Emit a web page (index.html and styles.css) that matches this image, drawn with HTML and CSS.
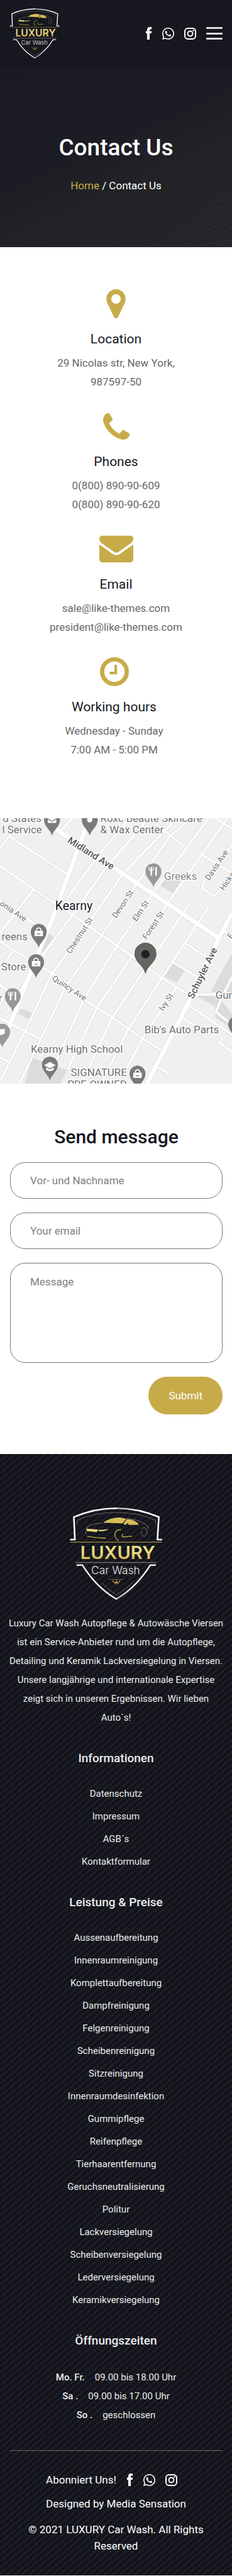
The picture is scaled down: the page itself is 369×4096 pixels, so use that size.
FILE: index.html
```html
<!DOCTYPE html>
<html lang="de">
<head>
<meta charset="utf-8">
<meta name="viewport" content="width=device-width, initial-scale=1">
<title>Contact Us – Luxury Car Wash</title>
<link rel="stylesheet" href="styles.css">
</head>
<body>
<svg class="defs" aria-hidden="true">
  <defs>
    <linearGradient id="gold" x1="0" y1="0" x2="0" y2="1"><stop offset=".5" stop-color="#ecdb82"/><stop offset=".95" stop-color="#c9a742"/></linearGradient>
    <linearGradient id="silver" x1="0" y1="0" x2="1" y2="0"><stop offset=".5" stop-color="#fff"/><stop offset=".52" stop-color="#b9b9b9"/><stop offset=".75" stop-color="#fff"/></linearGradient>
    <symbol id="logo" viewBox="20 22 526 530">
      <path fill="none" stroke="url(#silver)" stroke-width="9" d="M22 208H49L43 80Q160 30 285 30T527 80L519 208H545"/>
      <path fill="none" stroke="url(#silver)" stroke-width="8" d="M58 354H92Q170 480 285 547Q400 480 478 354H510"/>
      <path fill="none" stroke="#77736a" stroke-width="3" d="M62 125V98Q160 54 285 54T508 98V125M205 457Q240 495 285 522Q340 490 380 448"/>
      <path stroke="#a98f45" stroke-width="4" d="M22 223H545"/>
      <path stroke="#6f6f6c" stroke-width="6" d="M52 339H513"/>
      <path fill="#d8bd57" d="M208 112Q250 84 300 82L342 89L320 116ZM323 121L345 92Q395 94 414 124L356 125L350 113L340 123Z"/>
      <path fill="#ecdb82" d="M115 146L181 151L174 165L117 160ZM186 154L243 149Q220 162 181 161Z"/>
      <path fill="none" stroke="#8b8777" stroke-width="3" d="M115 146Q125 118 205 115M109 178Q108 150 125 135M345 88Q420 92 466 135V148M428 150Q440 130 455 148Q466 180 444 191Q426 186 427 160"/>
      <path fill="none" stroke="#c9a742" stroke-width="5" d="M312 151Q280 150 276 178Q277 206 300 214M319 176L320 194L375 189M118 190L170 197L226 200"/>
      <text class="logo-name" x="293" y="318" text-anchor="middle">LUXURY</text>
      <text class="logo-sub" x="281" y="405" text-anchor="middle">Car Wash</text>
      <path fill="none" stroke="#77736a" stroke-width="3" d="M242 435H324"/>
      <path fill="none" stroke="#c9a742" stroke-width="4" d="M285 438V463M265 440Q265 456 280 450M305 440Q305 456 290 450M274 460L285 448L296 460"/>
    </symbol>
    <symbol id="facebook" viewBox="0 440 768 1648"><path d="M511 980h257l-30 284h-227v824h-341v-824h-170v-284h170v-171q0-182 86-275.500t283-93.500h227v284h-142q-39 0-62.500 6.500t-34 23.500-13.500 34.500-3 49.500v142z"/></symbol>
    <symbol id="whatsapp" viewBox="0 32 448 448"><path d="M380.900 97.100C339 55.100 283.200 32 223.900 32c-122.400 0-222 99.600-222 222 0 39.100 10.200 77.300 29.600 111L0 480l117.700-30.900c32.400 17.700 68.900 27 106.100 27h.1c122.300 0 224.100-99.600 224.100-222 0-59.300-25.200-115-67.100-157zm-157 341.600c-33.200 0-65.700-8.900-94-25.700l-6.700-4-69.800 18.300L72 359.200l-4.400-7c-18.500-29.400-28.200-63.300-28.200-98.200 0-101.700 82.800-184.500 184.600-184.500 49.300 0 95.600 19.200 130.400 54.100 34.800 34.900 56.200 81.200 56.100 130.500 0 101.800-84.900 184.600-186.600 184.600zm101.200-138.200c-5.500-2.800-32.800-16.200-37.900-18-5.100-1.900-8.800-2.800-12.500 2.800-3.700 5.600-14.300 18-17.600 21.800-3.200 3.700-6.500 4.200-12 1.400-32.600-16.300-54-29.100-75.500-66-5.700-9.800 5.700-9.100 16.300-30.300 1.800-3.700.9-6.900-.5-9.700-1.400-2.800-12.500-30.100-17.100-41.200-4.500-10.800-9.100-9.300-12.500-9.500-3.200-.2-6.900-.2-10.600-.2-3.700 0-9.700 1.400-14.800 6.900-5.100 5.600-19.400 19-19.400 46.300 0 27.300 19.900 53.700 22.600 57.400 2.800 3.700 39.100 59.700 94.800 83.800 35.200 15.200 49 16.500 66.600 13.900 10.700-1.600 32.800-13.400 37.400-26.400 4.600-13 4.600-24.100 3.200-26.400-1.300-2.500-5-3.900-10.500-6.600z"/></symbol>
    <symbol id="instagram" viewBox="0 0 24 24"><rect x="1.300" y="1.300" width="21.400" height="21.400" rx="6" fill="none" stroke="currentColor" stroke-width="2.500"/><circle cx="12" cy="12" r="5" fill="none" stroke="currentColor" stroke-width="2.500"/><circle cx="18.300" cy="5.700" r="1.600"/></symbol>
    <symbol id="pin" viewBox="-16 -46 32 47" overflow="visible"><path d="M0 0C-2-10-15-17-15-30A15 15 0 0 1 15-30C15-17 2-10 0 0Z"/></symbol>
  </defs>
</svg>

<header class="topbar">
  <a class="brand" href="#" aria-label="Luxury Car Wash"><svg><use href="#logo"/></svg></a>
  <nav class="topbar-nav" aria-label="Social">
    <a class="social fb" href="#" aria-label="Facebook"><svg><use href="#facebook"/></svg></a>
    <a class="social" href="#" aria-label="WhatsApp"><svg><use href="#whatsapp"/></svg></a>
    <a class="social" href="#" aria-label="Instagram"><svg><use href="#instagram"/></svg></a>
    <button class="burger" type="button" aria-label="Menu"><span></span><span></span><span></span></button>
  </nav>
</header>

<main>
  <section class="hero">
    <h1>Contact Us</h1>
    <p class="crumbs"><a href="#">Home</a> / Contact Us</p>
    <svg class="hero-dots" viewBox="0 0 60 100" aria-hidden="true"><path d="M42 0h0M48 1h0M54 2h0M35 6h0M22 15h0M42 13h0M53 14h0M15 22h0M38 24h0M33 26h0M44 25h0M50 28h0M56 22h0M9 39h0M16 37h0M25 36h0M31 38h0M39 34h0M48 37h0M55 34h0M0 48h0M10 49h0M18 54h0M25 52h0M32 50h0M38 46h0M43 51h0M50 47h0M56 43h0M8 63h0M14 60h0M20 66h0M28 62h0M34 58h0M40 62h0M47 57h0M54 55h0M1 76h0M11 72h0M22 75h0M29 70h0M36 74h0M41 68h0M49 71h0M55 66h0M10 82h0M18 82h0M27 80h0M33 84h0M39 79h0M45 83h0M52 78h0M56 86h0M14 95h0M25 92h0M31 94h0M37 90h0M43 95h0M49 88h0M54 94h0"/></svg>
  </section>

  <section class="info">
    <article class="info-item">
      <svg class="icon-marker" viewBox="384 128 1024 1536"><path d="M1152 640q0-106-75-181t-181-75-181 75-75 181 75 181 181 75 181-75 75-181zm256 0q0 109-33 179l-364 774q-16 33-47.500 52t-67.500 19-67.500-19-46.500-52l-365-774q-33-70-33-179 0-212 150-362t362-150 362 150 150 362z"/></svg>
      <h2>Location</h2>
      <p>29 Nicolas str, New York,<br>987597-50</p>
    </article>
    <article class="info-item">
      <svg class="icon-phone" viewBox="192 128 1408 1408"><path d="M1600 1240q0 27-10 70.500t-21 68.500q-21 50-122 106-94 51-186 51-27 0-53-3.500t-57.500-12.500-47-14.500-55.500-20.500-49-18q-98-35-175-83-127-79-264-216t-216-264q-48-77-83-175-3-9-18-49t-20.500-55.500-14.500-47-12.500-57.500-3.500-53q0-92 51-186 56-101 106-122 25-11 68.500-21t70.500-10q14 0 21 3 18 6 53 76 11 19 30 54t35 63.500 31 53.500q3 4 17.500 25t21.500 35.500 7 28.500q0 20-28.500 50t-62 55-62 53-28.500 46q0 9 5 22.500t8.500 20.500 14 24 11.500 19q76 137 174 235t235 174q2 1 19 11.500t24 14 20.500 8.500 22.500 5q18 0 46-28.500t53-62 55-62 50-28.500q14 0 28.500 7t35.500 21.500 25 17.500q25 15 53.500 31t63.500 35 54 30q70 35 76 53 3 7 3 21z"/></svg>
      <h2>Phones</h2>
      <p>0(800) 890-90-609<br>0(800) 890-90-620</p>
    </article>
    <article class="info-item">
      <svg class="icon-mail" viewBox="0 256 1792 1408"><path d="M1792 710v794q0 66-47 113t-113 47h-1472q-66 0-113-47t-47-113v-794q44 49 101 87 362 246 497 345 57 42 92.500 65.500t94.500 48 110 24.500h2q51 0 110-24.500t94.500-48 92.500-65.500q170-123 498-345 57-39 100-87zm0-294q0 79-49 151t-122 123q-376 261-468 325-10 7-42.500 31t-54 38.500-52 32.500-57.500 27-50 9h-2q-23 0-50-9t-57.500-27-52-32.500-54-38.500-42.500-31q-91-64-262-182.500t-205-142.500q-62-42-117-115.500t-55-136.500q0-78 41.500-130t118.500-52h1472q65 0 112.500 47t47.500 113z"/></svg>
      <h2>Email</h2>
      <p>sale@like-themes.com<br>president@like-themes.com</p>
    </article>
    <article class="info-item info-hours">
      <svg class="icon-clock" viewBox="0 0 54 54"><circle cx="27" cy="27" r="23" fill="none" stroke="currentColor" stroke-width="8"/><path d="M27 14h4q1 0 1 1v16q0 1-1 1H19q-1 0-1-1v-3q0-1 1-1h8V15q0-1 1-1z"/></svg>
      <h2>Working hours</h2>
      <p>Wednesday - Sunday<br>7:00 AM - 5:00 PM</p>
    </article>
  </section>

  <section class="map" aria-label="Map">
    <svg viewBox="0 0 437 500" preserveAspectRatio="xMidYMid slice">
      <defs>
        <g id="streets">
          <path d="M410 61L345 130M840 61L600 330L410 590L240 810L40 1120M1000 61L690 370L490 650L285 925L145 1220L0 1500M730 61L560 260L500 340L380 500M1080 61L960 160L780 410L575 700L370 985L220 1290L110 1513M1180 61L865 470L660 760L475 1050L290 1450M1285 61L945 530L745 815L550 1095L380 1440M1070 530L830 870L635 1150L460 1513M1175 550L915 935L725 1215L570 1513M995 990L805 1265L700 1460"/>
          <path d="M50 160L385 370M0 320L190 450L410 590L575 700L745 815L915 935L1080 1035L1130 1025H1311M0 735L150 825L300 910L470 1050L635 1150L805 1265L910 1330M0 1155L60 1185L225 1265M0 970L40 1000L0 1080M0 1370L50 1395M60 150L0 225M190 450L0 690M75 785L0 890M0 510L230 660"/>
          <path d="M880 90L1040 215M1220 61L1311 120M1140 260L1311 360M1311 210L1160 400Q1130 425 1155 450L1210 490L1311 370M1050 745L1180 830M980 850L1120 930M1060 1080L1311 1245M1030 1150L1160 1230M870 1410L950 1455M1270 680L1311 710M1311 1190L1220 1120L1250 1050L1311 930M1260 1260L1240 1290L1311 1340"/>
        </g>
        <g id="avenues"><path d="M300 110L1235 715M505 61L440 230L300 600L215 800L60 1180L0 1310M1311 580L1235 720L1060 1080L830 1513"/></g>
        <g id="bag"><path fill="#fff" d="M-8-32H8V-22H-8Z"/><path d="M-4-32V-35Q0-40 4-35V-32" fill="none" stroke="#fff" stroke-width="2"/><path d="M-3-27Q0-24 3-27" fill="none" stroke="#777" stroke-width="1.500"/></g>
        <g id="cutlery" stroke="#fff" stroke-width="3"><path d="M-4-38V-22M5-38V-22"/><path stroke-width="1.500" d="M-8-38V-33Q-4-29 0-33V-38" fill="none"/></g>
      </defs>
      <rect width="437" height="500" fill="#f0f0f0"/>
      <g transform="scale(.3333 .3444) translate(0 -61)" fill="none">
        <path fill="#dcdcdc" d="M930 390L1025 405L975 470L900 425ZM980 850L1045 890L1000 960L925 925ZM1311 800L1190 1010L1311 1020ZM1100 1030L1230 1030L1311 1130V1210L1215 1150V1090ZM270 690L310 715L250 800L235 790ZM120 1100L180 1125L165 1160L100 1130ZM180 1370L380 1440L340 1513H140Z"/>
        <use href="#streets" stroke="#dadada" stroke-width="17"/>
        <use href="#avenues" stroke="#dedede" stroke-width="29"/>
        <use href="#streets" stroke="#fff" stroke-width="12"/>
        <use href="#avenues" stroke="#fff" stroke-width="24"/>
      </g>
      <g class="pins">
        <use href="#pin" x="-16" y="-46" width="32" height="47" transform="translate(98 33)"/>
        <use href="#pin" x="-16" y="-46" width="32" height="47" transform="translate(169 33)"/>
        <use class="light" href="#pin" x="-16" y="-46" width="32" height="47" transform="translate(289 130)"/>
        <use href="#pin" x="-16" y="-46" width="32" height="47" transform="translate(73 244)"/>
        <use href="#pin" x="-16" y="-46" width="32" height="47" transform="translate(68 301)"/>
        <use class="light" href="#pin" x="-16" y="-46" width="32" height="47" transform="translate(24 365)"/>
        <use class="light" href="#pin" x="-16" y="-46" width="32" height="47" transform="translate(4 432)"/>
        <use href="#pin" x="-16" y="-46" width="32" height="47" transform="translate(94 494)"/>
        <use href="#pin" x="-16" y="-46" width="32" height="47" transform="translate(259 511)"/>
        <use href="#pin" x="-16" y="-46" width="32" height="47" transform="translate(445 418)"/>
      </g>
      <use href="#bag" transform="translate(73 244)"/>
      <use href="#bag" transform="translate(68 301)"/>
      <use href="#bag" transform="translate(259 511)"/>
      <use href="#cutlery" transform="translate(289 130)"/>
      <use href="#cutlery" transform="translate(24 365)"/>
      <path fill="#fff" d="M90 0H106V9H90ZM-6 397H9V405Q2 411-6 407ZM83 465L94 459L105 465L94 471ZM87 469V474Q94 479 101 474V469L94 473Z"/>
      <path fill="none" stroke="#777" stroke-width="1.500" d="M90 1L98 6L106 1"/>
      <circle cx="169" cy="3" r="5" fill="#fff"/>
      <path fill="#66655f" stroke="#444" d="M274 292C271 277 254 272 254 255A20 20 0 0 1 294 255C294 272 277 277 274 292Z"/>
      <circle cx="274" cy="256" r="8" fill="#202127"/>
      <g class="places">
        <text x="78" y="7" text-anchor="end">d States</text>
        <text x="79" y="29" text-anchor="end">l Service</text>
        <text x="189" y="7">Roxc Beauté Skincare</text>
        <text x="189" y="29">&amp; Wax Center</text>
        <text class="soft" x="309" y="116">Greeks</text>
        <text x="52" y="230" text-anchor="end">reens</text>
        <text x="49" y="287" text-anchor="end">Store</text>
        <text x="4" y="346" text-anchor="end">r</text>
        <text x="406" y="340">Gun</text>
        <text x="272" y="405">Bib's Auto Parts</text>
        <text x="58" y="442">Kearny High School</text>
        <text x="239" y="486" text-anchor="end">SIGNATURE</text>
        <text x="239" y="508" text-anchor="end">PRE-OWNED</text>
        <text class="town" x="104" y="173">Kearny</text>
      </g>
      <g class="roads">
        <text class="major" transform="translate(126 45) rotate(32)">Midland Ave</text>
        <text class="major" transform="translate(364 341) rotate(-64)">Schuyler Ave</text>
        <text transform="translate(133 256) rotate(-57)">Chestnut St</text>
        <text transform="translate(219 189) rotate(-56)">Devon St</text>
        <text transform="translate(257 195) rotate(-56)">Elm St</text>
        <text transform="translate(276 229) rotate(-56)">Forest St</text>
        <text transform="translate(307 364) rotate(-56)">Ivy St</text>
        <text transform="translate(394 118) rotate(-56)">Davis Ave</text>
        <text transform="translate(422 137) rotate(-56)">Hicks</text>
        <text transform="translate(97 304) rotate(33)">Quincy Ave</text>
        <text transform="translate(46 195) rotate(34)" text-anchor="end">onia Ave</text>
        <text transform="translate(436 228) rotate(-56)">E</text>
      </g>
    </svg>
  </section>

  <section class="message">
    <h2>Send message</h2>
    <form class="form">
      <input type="text" placeholder="Vor- und Nachname" aria-label="Vor- und Nachname">
      <input type="email" placeholder="Your email" aria-label="Your email">
      <textarea placeholder="Message" aria-label="Message"></textarea>
      <button class="submit" type="submit">Submit</button>
    </form>
  </section>
</main>

<footer class="footer">
  <svg class="footer-logo" role="img" aria-label="Luxury Car Wash"><use href="#logo"/></svg>
  <p class="about">Luxury Car Wash Autopflege &amp; Autowäsche Viersen<br>ist ein Service-Anbieter rund um die Autopflege,<br>Detailing und Keramik Lackversiegelung in Viersen.<br>Unsere langjährige und internationale Expertise<br>zeigt sich in unseren Ergebnissen. Wir lieben<br>Auto´s!</p>
  <h3>Informationen</h3>
  <ul class="links">
    <li><a href="#">Datenschutz</a></li>
    <li><a href="#">Impressum</a></li>
    <li><a href="#">AGB´s</a></li>
    <li><a href="#">Kontaktformular</a></li>
  </ul>
  <h3>Leistung &amp; Preise</h3>
  <ul class="links">
    <li><a href="#">Aussenaufbereitung</a></li>
    <li><a href="#">Innenraumreinigung</a></li>
    <li><a href="#">Komplettaufbereitung</a></li>
    <li><a href="#">Dampfreinigung</a></li>
    <li><a href="#">Felgenreinigung</a></li>
    <li><a href="#">Scheibenreinigung</a></li>
    <li><a href="#">Sitzreinigung</a></li>
    <li><a href="#">Innenraumdesinfektion</a></li>
    <li><a href="#">Gummipflege</a></li>
    <li><a href="#">Reifenpflege</a></li>
    <li><a href="#">Tierhaarentfernung</a></li>
    <li><a href="#">Geruchsneutralisierung</a></li>
    <li><a href="#">Politur</a></li>
    <li><a href="#">Lackversiegelung</a></li>
    <li><a href="#">Scheibenversiegelung</a></li>
    <li><a href="#">Lederversiegelung</a></li>
    <li><a href="#">Keramikversiegelung</a></li>
  </ul>
  <h3>Öffnungszeiten</h3>
  <ul class="hours">
    <li><b>Mo. Fr.</b><span>09.00 bis 18.00 Uhr</span></li>
    <li><b>Sa .</b><span>09.00 bis 17.00 Uhr</span></li>
    <li><b>So .</b><span>geschlossen</span></li>
  </ul>
  <div class="bottom">
    <div class="follow">
      <span>Abonniert Uns!</span>
      <a class="social fb" href="#" aria-label="Facebook"><svg><use href="#facebook"/></svg></a>
      <a class="social" href="#" aria-label="WhatsApp"><svg><use href="#whatsapp"/></svg></a>
      <a class="social" href="#" aria-label="Instagram"><svg><use href="#instagram"/></svg></a>
    </div>
    <p class="credit">Designed by Media Sensation</p>
    <p class="copyright">© 2021 LUXURY Car Wash. All Rights Reserved</p>
  </div>
</footer>
</body>
</html>
```
FILE: styles.css
```css
* { box-sizing: border-box; margin: 0; padding: 0; }
body { font-family: Roboto, "Liberation Sans", sans-serif; font-size: 16px; line-height: 30px; color: #686868; background: #fff; }
a { color: inherit; text-decoration: none; }
ul { list-style: none; }
svg { display: block; fill: currentColor; }
.defs { position: absolute; width: 0; height: 0; }

.logo-name { font: 600 104px Inter, sans-serif; fill: url(#gold); }
.logo-sub { font: 300 62px Inter, sans-serif; fill: #e9e9e9; }

.topbar { display: flex; align-items: center; justify-content: space-between; padding: 13px 15px 14px; background: #16171f; color: #fff; }
.brand svg { width: 80px; height: 80px; }
.topbar-nav { display: flex; align-items: center; gap: 16px; }
.social svg { width: 19px; height: 19px; }
.social.fb svg { width: 11px; height: 20px; }
.burger { display: flex; flex-direction: column; justify-content: space-between; width: 26px; height: 20px; border: 0; background: none; }
.burger span { height: 3px; border-radius: 1px; background: #dcdcdc; }

.hero { position: relative; padding: 105px 16px 83px; text-align: center; color: #fff; background: linear-gradient(155deg, #191a22 0, #1b1c24 40%, #222326 62%, #25262a 100%); }
.hero h1 { font-size: 37px; line-height: 46px; font-weight: 500; margin-bottom: 22px; }
.crumbs { font-size: 17px; }
.crumbs a { color: #c8ab49; }
.hero-dots { position: absolute; right: 0; bottom: 0; width: 51px; height: 85px; fill: none; stroke: #77787c; stroke-width: 1; stroke-linecap: round; }

.info { display: flex; flex-direction: column; gap: 33px; padding: 67px 16px 94px; text-align: center; }
.info-item { display: flex; flex-direction: column; align-items: center; font-size: 17px; }
.info-item svg { height: 46px; color: #c8ab49; margin-bottom: 18px; }
.info-item h2 { font-size: 21px; line-height: 30px; font-weight: 400; color: #16171f; margin-bottom: 8px; }
.info-item .icon-marker { width: 31px; }
.info-item .icon-phone { width: 42px; }
.info-item .icon-mail { width: 54px; }
.info-item .icon-clock { width: 46px; }
.info-hours { padding-right: 6px; }

.map svg { width: 100%; aspect-ratio: 437 / 500; }
.pins { fill: #7b7b7b; }
.pins .light { fill: #999; }
.places text { font-size: 20px; fill: #707070; stroke: #fff; stroke-width: 3px; paint-order: stroke; }
.places .soft { fill: #868686; }
.places .town { font-size: 23px; fill: #16171f; }
.roads text { font-size: 15px; fill: #707070; stroke: #fff; stroke-width: 3px; paint-order: stroke; }
.roads .major { font-size: 18px; font-weight: 500; fill: #555; }

.message { padding: 67px 15px 63px 16px; }
.message h2 { font-size: 30px; line-height: 36px; font-weight: 500; text-align: center; color: #16171f; margin-bottom: 22px; }
.form { display: flex; flex-direction: column; gap: 22px; }
.form input, .form textarea { width: 100%; height: 58px; padding: 0 31px; border: 1px solid #77777a; border-radius: 24px; background: #fff; font: 400 17px/24px Roboto, sans-serif; color: #333; outline: 0; resize: none; }
.form textarea { height: 159px; padding-top: 17px; }
.form ::placeholder { color: #808080; }
.submit { align-self: flex-end; height: 60px; padding: 0 32px; border: 0; border-radius: 30px; background: #c8ab49; color: #fff; font: 400 17px/24px Roboto, sans-serif; }

.footer { padding: 84px 16px 34px; text-align: center; font-size: 15px; color: #ececec; background: #12131c url("data:image/svg+xml,%3Csvg xmlns='http://www.w3.org/2000/svg' width='12' height='10'%3E%3Cpath fill='%231e2024' d='M0 8h3v2H0zM0 0h3v1H0zM3 5h3v4H3zM6 3h3v4H6zM9 0h3v4H9z'/%3E%3C/svg%3E"); }
.footer-logo { width: 147px; height: 148px; margin: 0 auto 22px; }
.about { margin: 0 -10px 37px; }
.footer h3 { font-size: 19px; line-height: 26px; font-weight: 500; margin-bottom: 25px; }
.links { line-height: 36px; margin-bottom: 34px; }
.hours { padding-top: 5px; margin-bottom: 41px; }
.hours li { display: flex; justify-content: center; gap: 16px; }
.hours b { font-weight: 500; }
.bottom { padding-top: 31px; border-top: 1px solid #69696a; font-size: 17px; color: #fff; }
.follow { display: flex; justify-content: center; align-items: center; gap: 16px; padding-right: 14px; margin-bottom: 8px; }
.credit { margin-bottom: 13px; }
.copyright { line-height: 26px; }
```
